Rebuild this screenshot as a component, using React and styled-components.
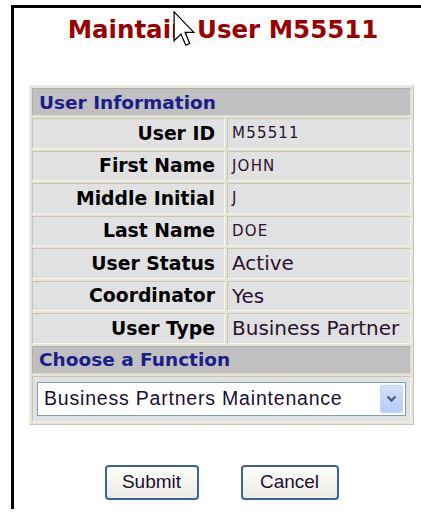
import React from "react";
import styled, { createGlobalStyle } from "styled-components";

const Global = createGlobalStyle`
  html, body { margin: 0; padding: 0; background: #fff; }
  body { font-family: "DejaVu Sans", Verdana, sans-serif; }
`;

const Frame = styled.div`
  position: relative;
  margin: 5px 0 0 11px;
  border-top: 3px solid #000;
  border-left: 3px solid #000;
  min-height: 504px;
  box-sizing: border-box;
`;

const Title = styled.h1`
  margin: 7px 0 0 0;
  padding-left: 11px;
  text-align: center;
  font: bold 24.5px/30px "DejaVu Sans", Verdana, sans-serif;
  color: #990000;
`;

const Grid = styled.table`
  margin: 40px 0 0 15px;
  width: 385px;
  border-collapse: separate;
  border-spacing: 2px;
  background: #e6e4d8;
  border: 1px solid;
  border-color: #f2f1ea #c9c5b2 #c9c5b2 #f2f1ea;
`;

const SectionCell = styled.th`
  height: 26px;
  padding: 0 0 0 6px;
  text-align: left;
  background: #c0c0c0;
  color: #1c1c8c;
  font: bold 18.5px "DejaVu Sans", Verdana, sans-serif;
  border: 1px solid;
  border-color: #b2b0a6 #dedcd2 #dedcd2 #b2b0a6;
`;

const Cell = styled.td`
  height: 28.5px;
  background: #e1e1e1;
  border: 1px solid;
  border-color: #c8c4b0 #f6f5ef #f6f5ef #c8c4b0;
  padding: 0 4px;
  white-space: nowrap;
`;

const Label = styled(Cell)`
  width: 178px;
  padding-right: 9px;
  text-align: right;
  color: #000;
  font: bold 18.8px "DejaVu Sans", Verdana, sans-serif;
`;

const Value = styled(Cell)`
  text-align: left;
  color: #2a1230;
  font-family: "DejaVu Sans", Verdana, sans-serif;
  font-size: ${(p) => (p.$small ? "15px" : "20px")};
  letter-spacing: ${(p) => (p.$small ? "1.2px" : "0")};
`;

const SelectCell = styled(Cell)`
  height: 44px;
  padding: 0 4px;
`;

const SelectBox = styled.div`
  display: flex;
  align-items: center;
  height: 34px;
  box-sizing: border-box;
  border: 1px solid #7f9db9;
  background: #fff;
  padding: 0 2px 0 6px;
`;

const SelectText = styled.span`
  flex: 1;
  font: 19.5px "Liberation Sans", Arial, sans-serif;
  letter-spacing: 0.8px;
  color: #1a1030;
`;

const ArrowButton = styled.span`
  display: flex;
  align-items: center;
  justify-content: center;
  width: 23px;
  height: 28px;
  border-radius: 2px;
  background: linear-gradient(#d4e0fb, #b7cbf7);
  border: 1px solid #c3d3fd;
  box-sizing: border-box;
`;

const Actions = styled.div`
  display: flex;
  justify-content: center;
  gap: 42px;
  width: 385px;
  margin: 40px 0 0 15px;
`;

const Button = styled.button`
  height: 35px;
  width: ${(p) => p.$w}px;
  border: 2px solid #3d6390;
  border-radius: 4px;
  background: linear-gradient(#fdfdfb, #ecebe5);
  font: 19px "Liberation Sans", Arial, sans-serif;
  color: #1a1030;
  padding: 0;
`;

const Pointer = styled.svg`
  position: absolute;
  left: 159px;
  top: 3px;
`;

const rows = [
  ["User ID", "M55511", true],
  ["First Name", "JOHN", true],
  ["Middle Initial", "J", true],
  ["Last Name", "DOE", true],
  ["User Status", "Active", false],
  ["Coordinator", "Yes", false],
  ["User Type", "Business Partner", false],
];

export default function App() {
  return (
    <>
      <Global />
      <Frame>
        <Title>Maintain User M55511</Title>
        <Pointer width="22" height="36" viewBox="0 0 12 20">
          <path
            d="M0.5 0.5 L0.5 16.5 L4.3 12.8 L7 19 L9.2 18 L6.6 11.9 L11.5 11.9 Z"
            fill="#fff"
            stroke="#000"
            strokeWidth="0.7"
            strokeLinejoin="miter"
          />
        </Pointer>
        <Grid>
          <tbody>
            <tr>
              <SectionCell colSpan={2}>User Information</SectionCell>
            </tr>
            {rows.map(([k, v, small]) => (
              <tr key={k}>
                <Label>{k}</Label>
                <Value $small={small}>{v}</Value>
              </tr>
            ))}
            <tr>
              <SectionCell colSpan={2}>Choose a Function</SectionCell>
            </tr>
            <tr>
              <SelectCell colSpan={2}>
                <SelectBox>
                  <SelectText>Business Partners Maintenance</SelectText>
                  <ArrowButton>
                    <svg width="11" height="8" viewBox="0 0 11 8">
                      <path d="M1.5 1.5 L5.5 5.5 L9.5 1.5" fill="none" stroke="#4d6185" strokeWidth="2.4" />
                    </svg>
                  </ArrowButton>
                </SelectBox>
              </SelectCell>
            </tr>
          </tbody>
        </Grid>
        <Actions>
          <Button $w={94}>Submit</Button>
          <Button $w={98}>Cancel</Button>
        </Actions>
      </Frame>
    </>
  );
}
